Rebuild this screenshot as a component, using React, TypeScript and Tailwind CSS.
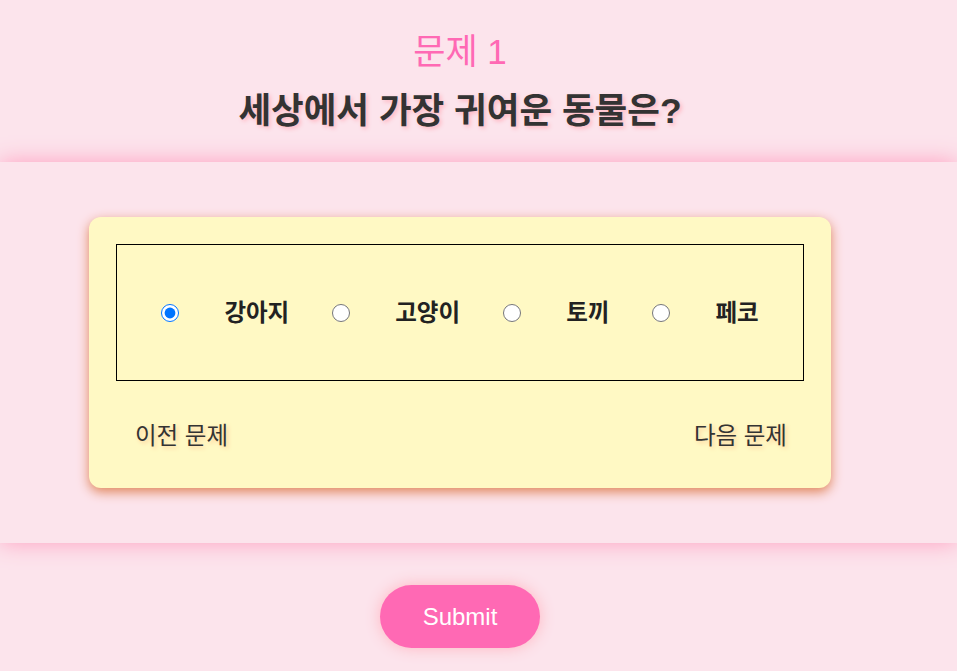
import React, { useState } from "react";

const FONT = { fontFamily: '"Liberation Sans", "Noto Sans CJK KR", Arial, sans-serif' };

export default function App() {
  const [sel, setSel] = useState("강아지");
  const options = ["강아지", "고양이", "토끼", "페코"];
  return (
    <div className="min-h-[671px] w-full bg-[#fce4ec] overflow-hidden" style={FONT}>
      <header className="pt-[32px] pb-[30px]">
        <div className="w-[920px] flex flex-col items-center">
          <div className="text-[35px] leading-[40px] text-[#ff69b4]">문제 1</div>
          <h1 className="mt-[19px] text-[35.5px] leading-[41px] font-bold text-[#333333] [text-shadow:2px_2px_4px_#ffb6c1]">
            세상에서 가장 귀여운 동물은?
          </h1>
        </div>
      </header>
      <section className="relative bg-[#fce4ec] py-[55px] shadow-[0_0_22px_#ff9fc0]">
        <div className="w-[920px] flex justify-center">
          <div className="w-[742px] h-[271px] bg-[#fff9c4] rounded-[12px] px-[27px] pt-[27px] shadow-[0_4px_12px_#e0855a]">
            <div className="h-[137px] border border-black flex items-center justify-center">
              {options.map((o, i) => (
                <div key={o} className="flex items-center">
                  <input
                    type="radio"
                    name="animal"
                    checked={sel === o}
                    onChange={() => setSel(o)}
                    className="w-[18px] h-[18px] m-0 accent-[#0075ff]"
                  />
                  <label
                    className={`ml-[45px] text-[23.5px] leading-[30px] font-bold text-[#222222] ${i < options.length - 1 ? "mr-[43px]" : ""}`}
                  >
                    {o}
                  </label>
                </div>
              ))}
            </div>
            <div className="flex justify-between pt-[40px] pl-[19px] pr-[17px]">
              <span className="text-[23.5px] leading-[30px] text-[#333333] [text-shadow:2px_2px_4px_#ffcc99]">이전 문제</span>
              <span className="text-[23.5px] leading-[30px] text-[#333333] [text-shadow:2px_2px_4px_#ffcc99]">다음 문제</span>
            </div>
          </div>
        </div>
      </section>
      <div className="w-[920px] flex justify-center pt-[42px]">
        <button className="w-[160px] h-[63px] rounded-full bg-[#ff69b4] text-white text-[24px] shadow-[0_0_15px_#ffb6c1]">
          Submit
        </button>
      </div>
    </div>
  );
}
